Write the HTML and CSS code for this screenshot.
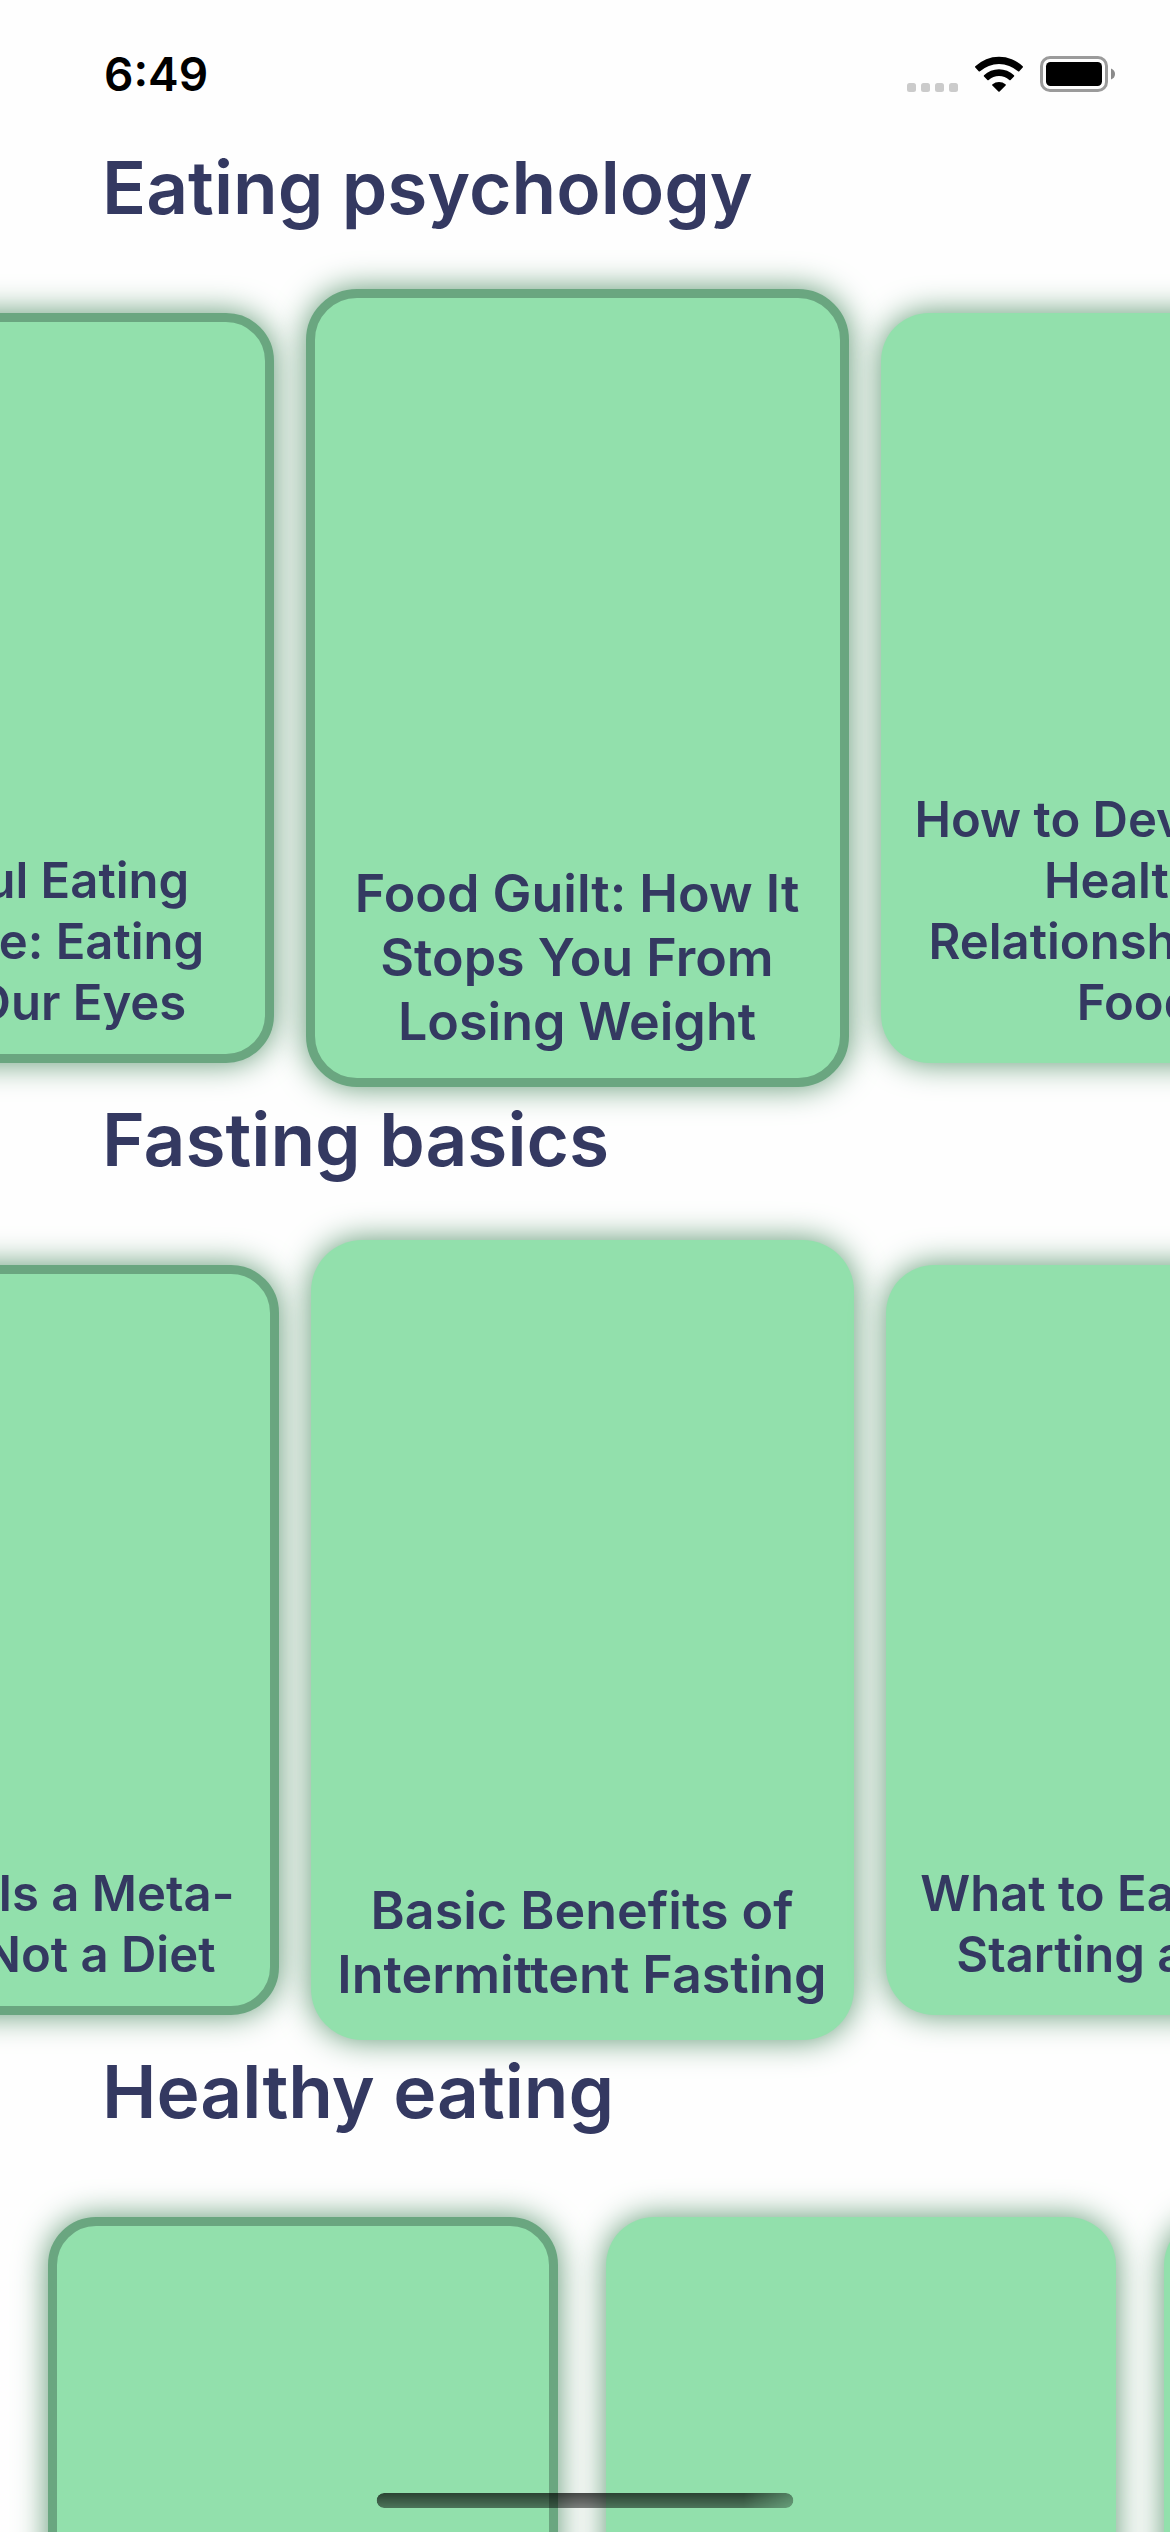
FILE: index.html
```html
<!DOCTYPE html>
<html lang="en">
<head>
<meta charset="utf-8">
<meta name="viewport" content="width=device-width, initial-scale=1">
<title>Articles</title>
<link rel="stylesheet" href="styles.css">
</head>
<body>
<div class="app">
  <header class="status">
    <time class="status-time">6:49</time>
    <div class="status-icons">
      <svg class="signal" width="51" height="9" viewBox="0 0 51 9" aria-hidden="true">
        <rect width="9" height="9" rx="2.5"/><rect x="14" width="9" height="9" rx="2.5"/><rect x="28" width="9" height="9" rx="2.5"/><rect x="42" width="9" height="9" rx="2.5"/>
      </svg>
      <svg class="wifi" width="48" height="36" viewBox="0 0 48 36" aria-hidden="true">
        <path d="M.3 10.3A34 34 0 0 1 47.7 10.3Q48.3 11 47.7 11.6L44.3 15.3Q43.7 15.9 43 15.3A28.500 28.500 0 0 0 5 15.3Q4.300 15.9 3.700 15.300L.3 11.600Q-.3 11 .3 10.300Z"/>
        <path d="M9 19.300A21.500 21.500 0 0 1 39 19.300Q39.600 20 39 20.600L35.600 24Q35 24.600 34.300 24A15.500 15.500 0 0 0 13.700 24Q13 24.600 12.400 24L9 20.600Q8.400 20 9 19.300Z"/>
        <path d="M17.500 28.300A10 10 0 0 1 30.500 28.300Q31.200 28.900 30.600 29.500L24.600 35.500Q24 36 23.400 35.500L17.400 29.500Q16.800 28.900 17.500 28.300Z"/>
      </svg>
      <svg class="battery" width="75" height="36" viewBox="0 0 75 36" aria-hidden="true">
        <rect x="1.500" y="1.500" width="65" height="33" rx="8.500" fill="none" stroke="#9b9b9b" stroke-width="3"/>
        <rect x="6" y="6" width="56" height="24" rx="4.500"/>
        <path d="M71 12.500Q75 14 75 18T71 23.500Z" fill="#8a8a8a"/>
      </svg>
    </div>
  </header>

  <main class="feed">
    <section class="section">
      <h2 class="section-title">Eating psychology</h2>
      <div class="strip strip-psychology">
        <a class="card read" href="#mindful"><span class="card-title">Mindful Eating<br>Practice: Eating<br>With Our Eyes</span></a>
        <a class="card read active" href="#guilt"><span class="card-title">Food Guilt: How It<br>Stops You From<br>Losing Weight</span></a>
        <a class="card" href="#relationship"><span class="card-title">How to Develop an<br>Healthy<br>Relationship With<br>Food</span></a>
      </div>
    </section>

    <section class="section">
      <h2 class="section-title">Fasting basics</h2>
      <div class="strip strip-fasting">
        <a class="card read" href="#meta"><span class="card-title">Fasting Is a Meta-<br>Habit, Not a Diet</span></a>
        <a class="card active" href="#benefits"><span class="card-title">Basic Benefits of<br>Intermittent Fasting</span></a>
        <a class="card" href="#before"><span class="card-title">What to Eat Before<br>Starting a Fast?</span></a>
      </div>
    </section>

    <section class="section">
      <h2 class="section-title">Healthy eating</h2>
      <div class="strip strip-start">
        <a class="card read" href="#healthy-1" aria-label="Article 1"></a>
        <a class="card" href="#healthy-2" aria-label="Article 2"></a>
        <a class="card" href="#healthy-3" aria-label="Article 3"></a>
      </div>
    </section>
  </main>
  <div class="home-indicator"></div>
</div>
</body>
</html>
```
FILE: styles.css
```css
:root {
  --ink: #343961;
  --card: #92e0ac;
  --read: #6aa680;
  --shadow: #5f9873;
}

* { box-sizing: border-box; }

body {
  margin: 0;
  background: #fefefe;
  color: var(--ink);
  font-family: Inter, "Liberation Sans", sans-serif;
}

.app {
  position: relative;
  display: flex;
  flex-direction: column;
  height: 100vh;
  overflow: hidden;
}

.status {
  flex: none;
  display: flex;
  justify-content: space-between;
  align-items: center;
  height: 136px;
  padding: 12px 55px 0 104px;
  color: #000;
}

.status-time {
  font-size: 46px;
  line-height: 56px;
  font-weight: 600;
}

.status-icons {
  display: flex;
  align-items: flex-end;
}

.signal { fill: #cbcbcb; margin-right: 17px; }
.wifi { margin-right: 17px; }

.feed {
  flex: 1;
  min-height: 0;
}

.section-title {
  margin: 0;
  padding: 0 102px 48px;
  font-size: 73px;
  line-height: 104px;
  font-weight: 600;
  white-space: nowrap;
}

.strip {
  display: flex;
  justify-content: center;
  align-items: center;
  gap: 32px;
  height: 800px;
}

.strip-psychology { padding-right: 16px; }
.strip-fasting { padding-right: 6px; }

.strip-start {
  justify-content: flex-start;
  gap: 48px;
  padding-left: 48px;
}

.card {
  flex: none;
  display: flex;
  align-items: flex-end;
  justify-content: center;
  width: 510px;
  height: 750px;
  padding-bottom: 30px;
  border-radius: 48px;
  background: var(--card);
  box-shadow: 0 0 32px var(--shadow);
  color: inherit;
  text-align: center;
  text-decoration: none;
  white-space: nowrap;
  font-size: 49px;
  line-height: 61px;
  font-weight: 600;
}

.card.read {
  border: 9px solid var(--read);
  padding-bottom: 21px;
}

.card.active {
  width: 543px;
  height: 800px;
  padding-bottom: 33px;
  border-radius: 51px;
  font-size: 52px;
  line-height: 64px;
}

.card.active.read {
  height: 798px;
  padding-bottom: 24px;
}

.home-indicator {
  position: absolute;
  bottom: 24px;
  left: 50%;
  width: 417px;
  height: 15px;
  transform: translateX(-50%);
  border-radius: 8px;
  background: linear-gradient(rgba(0, 0, 0, .7), rgba(0, 0, 0, .48));
  mask-image: linear-gradient(to right, #000 88%, rgba(0, 0, 0, .6));
}
```
